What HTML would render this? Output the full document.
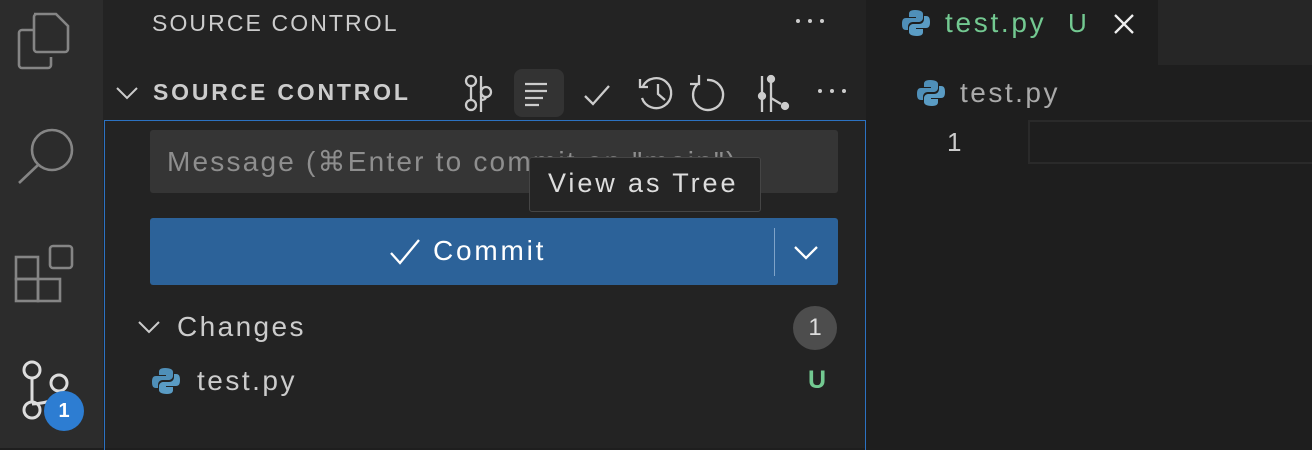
<!DOCTYPE html><html><head><style>
*{margin:0;padding:0;box-sizing:border-box}
body{width:1312px;height:448px;background:#1e1e1e;font-family:"Liberation Sans",sans-serif;position:relative;overflow:hidden;color:#ccc}
.a{position:absolute;white-space:nowrap}
</style></head><body>
<div class="a" style="left:0;top:0;width:103px;height:448px;background:#2c2c2c"></div>
<div class="a" style="left:103px;top:0;width:763px;height:448px;background:#232323"></div>
<div class="a" style="left:1158px;top:0;width:154px;height:65px;background:#262626"></div>
<svg class="a" style="left:0;top:0" width="103" height="448" fill="none" stroke="#858585" stroke-width="2.6">
<path d="M34 30H22a3 3 0 0 0-3 3v32a3 3 0 0 0 3 3h26a3 3 0 0 0 3-3v-8"/>
<path d="M34 14h22l12 12v23a3 3 0 0 1-3 3H37a3 3 0 0 1-3-3V17a3 3 0 0 1 3-3z"/>
<circle cx="52" cy="150" r="20"/><path d="M38 165L19 183"/>
<rect x="16" y="257" width="22" height="22"/><rect x="16" y="279" width="22" height="22"/><rect x="38" y="279" width="22" height="22"/><rect x="50" y="246" width="22" height="22" rx="3"/>
<g stroke="#ddd" stroke-width="3"><circle cx="32" cy="370" r="8"/><circle cx="59" cy="383" r="8"/><circle cx="32" cy="410" r="8"/><path d="M32 378v24M59 391c0 8-10 12-27 13"/></g>
</svg>
<div class="a" style="left:44px;top:391px;width:40px;height:40px;border-radius:50%;background:#2d7dd2;color:#fff;font-weight:bold;font-size:20px;text-align:center;line-height:40px">1</div>
<div class="a" style="left:152px;top:10px;font-size:23px;color:#ccc;letter-spacing:2.1px">SOURCE CONTROL</div>
<svg class="a" style="left:792px;top:14px" width="36" height="12" fill="#ccc"><circle cx="6" cy="7" r="2"/><circle cx="18" cy="7" r="2"/><circle cx="30" cy="7" r="2"/></svg>
<svg class="a" style="left:113px;top:82px" width="30" height="24" fill="none" stroke="#ccc" stroke-width="2"><path d="M4 6l10 10 10-10"/></svg>
<div class="a" style="left:153px;top:79px;font-size:23px;font-weight:bold;color:#ccc;letter-spacing:2.8px">SOURCE CONTROL</div>
<div class="a" style="left:514px;top:69px;width:50px;height:48px;border-radius:8px;background:#333"></div>
<svg class="a" style="left:455px;top:70px" width="400" height="46" fill="none" stroke="#ccc" stroke-width="2.3">
<circle cx="16" cy="11" r="5"/><circle cx="16" cy="35" r="5"/><circle cx="31" cy="22" r="5"/><path d="M16 16v14M26 6v36M26 30c5 0 5-3 5-3"/>
<path d="M70 14h22M70 21h22M70 28h18M70 35h14"/>
<path d="M130 26l8 8 16-18"/>
<path d="M188 16a15 15 0 1 1 -1 12M185 9v8h8M203 14v10l7 6"/>
<path d="M252 10a15 15 0 1 1 -8 3M244 5v9h-9" transform="translate(0,0)"/>
<path d="M307 6v36M316 6v36M316 28l10 6"/><circle cx="316" cy="9" r="3" fill="#ccc"/><circle cx="307" cy="26" r="3" fill="#ccc"/><circle cx="330" cy="36" r="3" fill="#ccc"/>
</svg>
<svg class="a" style="left:814px;top:84px" width="36" height="12" fill="#ccc"><circle cx="6" cy="7" r="2"/><circle cx="18" cy="7" r="2"/><circle cx="30" cy="7" r="2"/></svg>
<div class="a" style="left:104px;top:120px;width:762px;height:330px;border:1.5px solid #2c72c2;border-bottom:none"></div>
<div class="a" style="left:150px;top:130px;width:688px;height:63px;background:#353535;border-radius:3px"></div>
<div class="a" style="left:167px;top:145px;font-size:28px;color:#8e8e8e;letter-spacing:2.2px">Message (⌘Enter to commit on "main")</div>
<div class="a" style="left:150px;top:218px;width:688px;height:67px;background:#2c6299;border-radius:3px"></div>
<div class="a" style="left:774px;top:228px;width:1px;height:48px;background:#7fa3c8"></div>
<svg class="a" style="left:388px;top:236px" width="36" height="32" fill="none" stroke="#fff" stroke-width="2.3"><path d="M3 17l9 10L31 4"/></svg>
<div class="a" style="left:433px;top:235px;font-size:28px;color:#fff;letter-spacing:2.8px">Commit</div>
<svg class="a" style="left:792px;top:242px" width="28" height="20" fill="none" stroke="#fff" stroke-width="2.3"><path d="M3 5l11 11 11-11"/></svg>
<div class="a" style="left:529px;top:157px;width:232px;height:55px;background:#252525;border:1px solid #454545;border-radius:3px;font-size:27px;color:#ddd;padding:10px 0 0 18px;letter-spacing:2.9px">View as Tree</div>
<svg class="a" style="left:137px;top:318px" width="26" height="20" fill="none" stroke="#ccc" stroke-width="2"><path d="M2 4l10 10 10-10"/></svg>
<div class="a" style="left:177px;top:311px;font-size:28px;color:#ccc;letter-spacing:2.4px">Changes</div>
<div class="a" style="left:793px;top:306px;width:44px;height:44px;border-radius:50%;background:#4d4d4d;color:#ddd;font-size:24px;text-align:center;line-height:44px">1</div>
<svg class="a" style="left:152px;top:367px" width="28" height="28"><path d="M13 1c-5 0-6 2-6 4v3h7v1H4c-3 0-4 2-4 6s1 6 4 6h2v-3c0-3 2-5 5-5h6c2 0 4-2 4-4V5c0-2-2-4-8-4z" fill="#4f8fb8"/><path d="M15 27c5 0 6-2 6-4v-3h-7v-1h10c3 0 4-2 4-6s-1-6-4-6h-2v3c0 3-2 5-5 5h-6c-2 0-4 2-4 4v4c0 2 2 4 8 4z" fill="#5a9cc4"/></svg>
<div class="a" style="left:197px;top:365px;font-size:28px;color:#ccc;letter-spacing:2.5px">test.py</div>
<div class="a" style="left:808px;top:366px;font-size:25px;font-weight:bold;color:#73c991">U</div>
<svg class="a" style="left:902px;top:9px" width="28" height="28"><path d="M13 1c-5 0-6 2-6 4v3h7v1H4c-3 0-4 2-4 6s1 6 4 6h2v-3c0-3 2-5 5-5h6c2 0 4-2 4-4V5c0-2-2-4-8-4z" fill="#4f8fb8"/><path d="M15 27c5 0 6-2 6-4v-3h-7v-1h10c3 0 4-2 4-6s-1-6-4-6h-2v3c0 3-2 5-5 5h-6c-2 0-4 2-4 4v4c0 2 2 4 8 4z" fill="#5a9cc4"/></svg>
<div class="a" style="left:945px;top:7px;font-size:28px;color:#73c991;letter-spacing:2.7px">test.py</div>
<div class="a" style="left:1068px;top:8px;font-size:26px;color:#73c991">U</div>
<svg class="a" style="left:1112px;top:12px" width="24" height="24" stroke="#eee" stroke-width="2.3"><path d="M3 3l18 18M21 3L3 21"/></svg>
<svg class="a" style="left:917px;top:79px" width="28" height="28"><path d="M13 1c-5 0-6 2-6 4v3h7v1H4c-3 0-4 2-4 6s1 6 4 6h2v-3c0-3 2-5 5-5h6c2 0 4-2 4-4V5c0-2-2-4-8-4z" fill="#4f8fb8"/><path d="M15 27c5 0 6-2 6-4v-3h-7v-1h10c3 0 4-2 4-6s-1-6-4-6h-2v3c0 3-2 5-5 5h-6c-2 0-4 2-4 4v4c0 2 2 4 8 4z" fill="#5a9cc4"/></svg>
<div class="a" style="left:960px;top:77px;font-size:28px;color:#aaa;letter-spacing:2.5px">test.py</div>
<div class="a" style="left:947px;top:127px;font-size:26px;color:#ccc">1</div>
<div class="a" style="left:1028px;top:120px;width:290px;height:44px;border:2px solid #2a2a2a"></div>
</body></html>
